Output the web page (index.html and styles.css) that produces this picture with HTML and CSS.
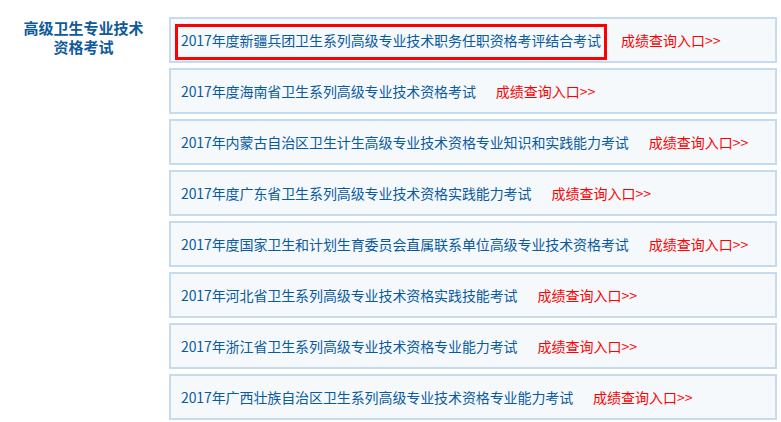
FILE: index.html
```html
<!DOCTYPE html>
<html lang="zh-CN">
<head>
<meta charset="utf-8">
<title>高级卫生专业技术资格考试</title>
<link rel="stylesheet" href="styles.css">
</head>
<body>
<div class="page">
  <div class="side">
    <h2 class="side-title">高级卫生专业技术<br>资格考试</h2>
  </div>
  <ul class="list">
    <li class="row"><a class="name focused" href="#">2017年度新疆兵团卫生系列高级专业技术职务任职资格考评结合考试</a><a class="query" href="#">成绩查询入口&gt;&gt;</a></li>
    <li class="row"><a class="name" href="#">2017年度海南省卫生系列高级专业技术资格考试</a><a class="query" href="#">成绩查询入口&gt;&gt;</a></li>
    <li class="row"><a class="name" href="#">2017年内蒙古自治区卫生计生高级专业技术资格专业知识和实践能力考试</a><a class="query" href="#">成绩查询入口&gt;&gt;</a></li>
    <li class="row"><a class="name" href="#">2017年度广东省卫生系列高级专业技术资格实践能力考试</a><a class="query" href="#">成绩查询入口&gt;&gt;</a></li>
    <li class="row"><a class="name" href="#">2017年度国家卫生和计划生育委员会直属联系单位高级专业技术资格考试</a><a class="query" href="#">成绩查询入口&gt;&gt;</a></li>
    <li class="row"><a class="name" href="#">2017年河北省卫生系列高级专业技术资格实践技能考试</a><a class="query" href="#">成绩查询入口&gt;&gt;</a></li>
    <li class="row"><a class="name" href="#">2017年浙江省卫生系列高级专业技术资格专业能力考试</a><a class="query" href="#">成绩查询入口&gt;&gt;</a></li>
    <li class="row"><a class="name" href="#">2017年广西壮族自治区卫生系列高级专业技术资格专业能力考试</a><a class="query" href="#">成绩查询入口&gt;&gt;</a></li>
  </ul>
</div>
</body>
</html>
```

FILE: styles.css
```css
* { box-sizing: border-box; }
html, body {
  margin: 0;
  padding: 0;
  background: #ffffff;
}
body {
  font-family: "Noto Sans CJK SC", "Noto Sans", sans-serif;
  font-size: 14px;
}
.page {
  display: grid;
  grid-template-columns: 169px 608px;
  padding-top: 17px;
}
.side {
  width: 167px;
  text-align: center;
}
.side-title {
  margin: 0;
  padding-top: 1px;
  font-size: 15px;
  line-height: 19px;
  font-weight: bold;
  color: #0f5a9d;
}
.list {
  list-style: none;
  margin: 0;
  padding: 0;
  display: flex;
  flex-direction: column;
  gap: 5px;
}
.row {
  height: 46px;
  display: flex;
  align-items: center;
  padding-left: 10px;
  background: #f5f9fc;
  border: 2px solid #c6dbed;
}
.name {
  display: inline-block;
  line-height: 20px;
  color: #0a5a9e;
  text-decoration: none;
  white-space: nowrap;
  letter-spacing: -0.1px;
  padding: 3px 3px 7px;
  margin: -3px -3px -7px;
}
.focused {
  outline: 3px solid #ff0000;
}
.query {
  margin-left: 20px;
  line-height: 20px;
  color: #ff0000;
  text-decoration: none;
  white-space: nowrap;
}
```
